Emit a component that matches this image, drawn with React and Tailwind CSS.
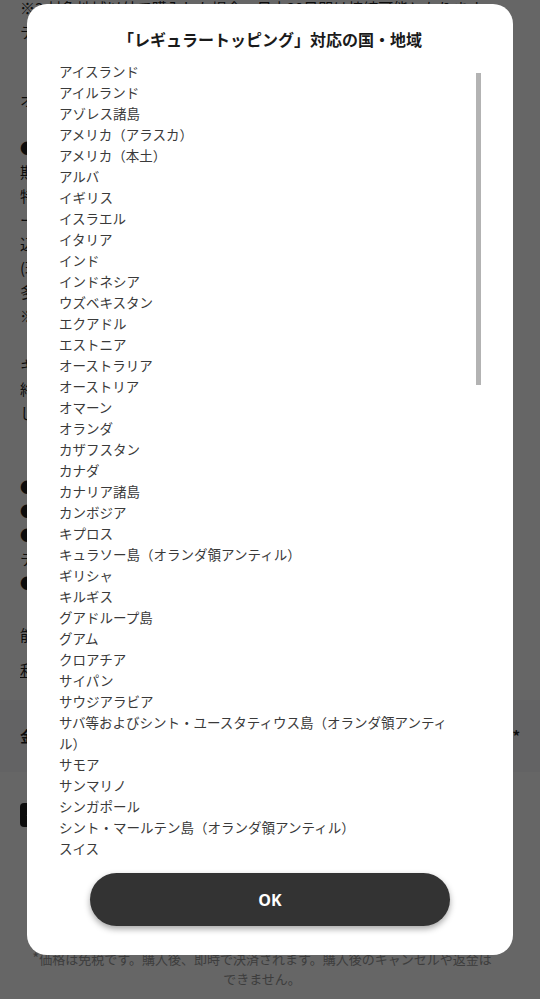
import React from 'react';

const regions = [
  'アイスランド',
  'アイルランド',
  'アゾレス諸島',
  'アメリカ（アラスカ）',
  'アメリカ（本土）',
  'アルバ',
  'イギリス',
  'イスラエル',
  'イタリア',
  'インド',
  'インドネシア',
  'ウズベキスタン',
  'エクアドル',
  'エストニア',
  'オーストラリア',
  'オーストリア',
  'オマーン',
  'オランダ',
  'カザフスタン',
  'カナダ',
  'カナリア諸島',
  'カンボジア',
  'キプロス',
  'キュラソー島（オランダ領アンティル）',
  'ギリシャ',
  'キルギス',
  'グアドループ島',
  'グアム',
  'クロアチア',
  'サイパン',
  'サウジアラビア',
  'サバ等およびシント・ユースタティウス島（オランダ領アンティル）',
  'サモア',
  'サンマリノ',
  'シンガポール',
  'シント・マールテン島（オランダ領アンティル）',
  'スイス',
  'スウェーデン',
  'スペイン',
  'スリランカ',
  'スロバキア',
];

const jp = { fontFamily: '"Noto Sans CJK JP", "Noto Sans", sans-serif' };

const Line = ({ children, className = '' }) => (
  <div className={`whitespace-nowrap overflow-hidden ${className}`}>{children}</div>
);

// page that sits behind the dialog
const BackgroundPage = () => (
  <div className="min-h-[999px] bg-white text-[15px] leading-[24px] text-[#1f1f1f]" style={jp}>
    <div className="px-5 mt-[-4px]">
      <Line>※3 対象地域以外で購入した場合、日本30日間は接続可能となります。</Line>
      <Line>テザリングのご利用には別途設定が必要です。</Line>
    </div>
    <div className="px-5 mt-[44px]">
      <Line>オプションについて</Line>
    </div>
    <div className="px-5 mt-[24px]">
      <Line>● ご利用上の注意</Line>
      <Line>期間中は対象の国・地域で高速データ通信がご利用いただけます。</Line>
      <Line>特定のアプリは速度が制限される場合があります。</Line>
      <Line>ー日あたりの利用量に上限はありません。</Line>
      <Line>込み合う時間帯は通信速度が低下することがあります。</Line>
      <Line>(現地の通信事業者の状況によります)</Line>
      <Line>多くの国・地域で4G/LTEに対応しています。</Line>
      <Line>※一部の地域では3Gのみとなります。</Line>
    </div>
    <div className="px-5 mt-[25px]">
      <Line>キャンセルについて</Line>
      <Line>終了後の払い戻しはいたしかねます。</Line>
      <Line>しばらくお待ちください。</Line>
    </div>
    <div className="px-5 mt-[50px]">
      <Line>● 現地到着後に自動で開始されます</Line>
      <Line>● 期間は24時間単位です</Line>
      <Line>● 通話・SMSは対象外です</Line>
      <Line>テザリングにも対応しています</Line>
      <Line>● 再購入はいつでも可能です</Line>
    </div>
    <div className="px-5 mt-[28px]">
      <Line>能力を超える通信はご遠慮ください。</Line>
    </div>
    <div className="px-5 mt-[11px]">
      <Line className="underline">利用規約</Line>
    </div>
    <div className="mt-[18px] h-[72px] bg-[#f7f8fa] px-5 flex items-center justify-between font-bold">
      <span>金額</span>
      <span>¥1,500*</span>
    </div>
    <div className="px-5 mt-[31px] flex items-center gap-3">
      <div className="w-6 h-6 rounded-[4px] bg-[#222] flex items-center justify-center">
        <svg viewBox="0 0 24 24" className="w-4 h-4" fill="none" stroke="white" strokeWidth="3">
          <path d="M5 12l5 5 9-10" />
        </svg>
      </div>
      <span>利用規約に同意する</span>
    </div>
    <div className="mt-[121px] pl-[4px] pr-[20px] flex flex-col items-center text-[13px] leading-[20px] text-[#9a9a9a]">
      <div className="whitespace-nowrap">
        <span className="text-[15px]">*</span>価格は免税です。購入後、即時で決済されます。購入後のキャンセルや返金は
      </div>
      <div>できません。</div>
    </div>
  </div>
);

const RegionDialog = () => (
  <div className="fixed inset-0 bg-black/60 flex justify-center pt-[4px] px-[27px]">
    <div className="w-[486px] h-[951px] bg-white rounded-[20px] flex flex-col pt-[23px] pb-[29px]" style={jp}>
      <h2 className="text-[16px] leading-[24px] font-bold text-[#1a1a1a] text-center">
        「レギュラートッピング」対応の国・地域
      </h2>
      <div className="relative mt-[10px] mx-[32px] h-[798px] overflow-hidden">
        <ul className="pr-[22px] text-[13.5px] leading-[21px] text-[#3a3a3a]">
          {regions.map((name) => (
            <li key={name}>{name}</li>
          ))}
        </ul>
        <div className="absolute right-0 top-[12px] w-[5px] h-[312px] bg-[#b3b3b3]" />
      </div>
      <div className="mt-[14px] flex justify-center">
        <button
          type="button"
          className="w-[360px] h-[53px] rounded-full bg-[#333333] text-white text-[16px] font-bold shadow-[0_3px_6px_rgba(0,0,0,0.35)]"
          style={{ fontFamily: '"Open Sans", "Noto Sans", sans-serif' }}
        >
          OK
        </button>
      </div>
    </div>
  </div>
);

export default function App() {
  return (
    <div className="relative w-[540px] h-[999px] overflow-hidden">
      <BackgroundPage />
      <RegionDialog />
    </div>
  );
}
